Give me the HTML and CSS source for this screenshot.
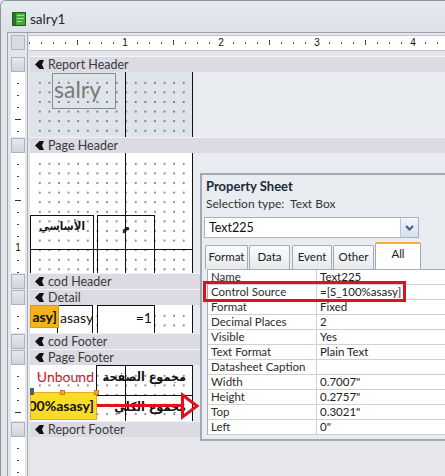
FILE: index.html
```html
<!DOCTYPE html>
<html lang="en">
<head>
<meta charset="utf-8">
<title>salry1</title>
<link rel="stylesheet" href="styles.css">
</head>
<body>
<div class="win">
  <header class="titlebar">
    <svg class="ticon" width="14" height="14" viewBox="0 0 14 14">
      <rect x="0.5" y="0.5" width="13" height="13" fill="#43a83a" stroke="#1f5e1a"/>
      <rect x="1" y="1" width="3" height="12" fill="#2a7424"/>
      <rect x="5" y="3" width="7" height="1" fill="#a6e596"/>
      <rect x="5" y="6" width="7" height="1" fill="#a6e596"/>
      <rect x="5" y="9" width="5" height="1" fill="#a6e596"/>
    </svg>
    <span class="title">salry1</span>
  </header>
  <div class="frame">
    <div class="row ruler-row">
      <div class="vr"><div class="corner"></div></div>
      <div class="main"><div class="hruler"><span class="n"><b>1</b></span><span class="n"><b>2</b></span><span class="n"><b>3</b></span><span class="n"><b>4</b></span></div></div>
    </div>

    <div class="row band-row">
      <div class="vr"><div class="sel"></div></div>
      <div class="band"><svg class="bi" viewBox="0 0 9 9"><path d="M0 4.5 L4.5 0 L9 0 L7 4.5 L9 9 L4.5 9 Z"/></svg>Report Header</div>
    </div>
    <div class="row sec rh">
      <div class="vr"><div class="vt"><i class="vh"></i></div></div>
      <div class="main">
        <div class="canvas rh-canvas">
          <div class="ctl salry">salry</div>
        </div>
        <div class="rest"></div>
      </div>
    </div>

    <div class="row band-row">
      <div class="vr"><div class="sel"></div></div>
      <div class="band"><svg class="bi" viewBox="0 0 9 9"><path d="M0 4.5 L4.5 0 L9 0 L7 4.5 L9 9 L4.5 9 Z"/></svg>Page Header</div>
    </div>
    <div class="row sec ph">
      <div class="vr"><div class="vt"><i class="vh"></i><b class="vn">1</b></div></div>
      <div class="main">
        <div class="canvas">
          <div class="ctl ar ph1">الأساسي</div>
          <div class="ctl ar ph2">م</div>
        </div>
        <div class="rest"></div>
      </div>
    </div>

    <div class="row band-row">
      <div class="vr"><div class="sel"></div></div>
      <div class="band"><svg class="bi" viewBox="0 0 9 9"><path d="M0 4.5 L4.5 0 L9 0 L7 4.5 L9 9 L4.5 9 Z"/></svg>cod Header</div>
    </div>
    <div class="row band-row">
      <div class="vr"><div class="sel"></div></div>
      <div class="band"><svg class="bi" viewBox="0 0 9 9"><path d="M0 4.5 L4.5 0 L9 0 L7 4.5 L9 9 L4.5 9 Z"/></svg>Detail</div>
    </div>
    <div class="row sec dt">
      <div class="vr"><div class="vt"></div></div>
      <div class="main">
        <div class="canvas">
          <div class="ctl dt-asasy">asasy</div>
          <div class="ctl clip dt-y"><span>asy]</span></div>
          <div class="ctl dt-1">=1</div>
        </div>
        <div class="rest"></div>
      </div>
    </div>

    <div class="row band-row">
      <div class="vr"><div class="sel"></div></div>
      <div class="band"><svg class="bi" viewBox="0 0 9 9"><path d="M0 4.5 L4.5 0 L9 0 L7 4.5 L9 9 L4.5 9 Z"/></svg>cod Footer</div>
    </div>
    <div class="row band-row">
      <div class="vr"><div class="sel"></div></div>
      <div class="band"><svg class="bi" viewBox="0 0 9 9"><path d="M0 4.5 L4.5 0 L9 0 L7 4.5 L9 9 L4.5 9 Z"/></svg>Page Footer</div>
    </div>
    <div class="row sec pf">
      <div class="vr"><div class="vt"><i class="vh"></i></div></div>
      <div class="main">
        <div class="canvas">
          <div class="ctl pf-unb">Unbound</div>
          <div class="ctl ar pf-l1">مجموع الصفحة</div>
          <div class="ctl ar pf-l2">مجموع الكلي</div>
          <div class="ctl clip pf-y"><span>00%asasy]</span></div>
          <div class="ctl h-move"></div>
          <div class="ctl hd hd1"></div>
          <div class="ctl hd hd2"></div>
        </div>
        <div class="rest"></div>
      </div>
    </div>

    <div class="row band-row">
      <div class="vr"><div class="sel"></div></div>
      <div class="band"><svg class="bi" viewBox="0 0 9 9"><path d="M0 4.5 L4.5 0 L9 0 L7 4.5 L9 9 L4.5 9 Z"/></svg>Report Footer</div>
    </div>
    <div class="row fill">
      <div class="vr"><div class="vt"></div></div>
      <div class="main empty"></div>
    </div>
  </div>
</div>

<div class="props">
  <div class="ps-title">Property Sheet</div>
  <div class="ps-sel">Selection type:&nbsp; Text Box</div>
  <div class="ps-combo"><span class="ps-val">Text225</span><span class="ps-btn"><svg width="9" height="6" viewBox="0 0 9 6"><path d="M1 1 L4.5 4.5 L8 1" fill="none" stroke="#3b5f8e" stroke-width="2"/></svg></span></div>
  <div class="ps-tabs">
    <span class="tab t-format">Format</span>
    <span class="tab t-data">Data</span>
    <span class="tab t-event">Event</span>
    <span class="tab t-other">Other</span>
    <span class="tab t-all">All</span>
  </div>
  <div class="ps-grid">
    <div class="pr"><span class="pk">Name</span><span class="pv">Text225</span></div>
    <div class="pr"><span class="pk">Control Source</span><span class="pv">=[S_100%asasy]</span></div>
    <div class="pr"><span class="pk">Format</span><span class="pv">Fixed</span></div>
    <div class="pr"><span class="pk">Decimal Places</span><span class="pv">2</span></div>
    <div class="pr"><span class="pk">Visible</span><span class="pv">Yes</span></div>
    <div class="pr"><span class="pk">Text Format</span><span class="pv">Plain Text</span></div>
    <div class="pr"><span class="pk">Datasheet Caption</span><span class="pv"></span></div>
    <div class="pr"><span class="pk">Width</span><span class="pv">0.7007"</span></div>
    <div class="pr"><span class="pk">Height</span><span class="pv">0.2757"</span></div>
    <div class="pr"><span class="pk">Top</span><span class="pv">0.3021"</span></div>
    <div class="pr"><span class="pk">Left</span><span class="pv">0"</span></div>
  </div>
  <div class="hl"></div>
</div>

<svg class="arrow" width="445" height="476" viewBox="0 0 445 476">
  <line x1="97" y1="405.5" x2="183" y2="405.5" stroke="#e3111b" stroke-width="3"/>
  <polygon points="182.5,395 197,406 182.5,417" fill="none" stroke="#e3111b" stroke-width="3" stroke-linejoin="miter"/>
</svg>
</body>
</html>
```

FILE: styles.css
```css
* { box-sizing: border-box; margin: 0; padding: 0; }
html, body { width: 445px; height: 476px; overflow: hidden; background: #e3e6ea; }
body { position: relative; font-family: Lato, "DejaVu Sans", sans-serif; color: #222; }

.win {
  width: 445px; height: 476px;
  border-left: 1px solid #8e949c; border-top: 1px solid #8e949c;
  border-top-left-radius: 6px;
  background: #e1e5ea;
  display: flex; flex-direction: column; overflow: hidden;
}
.titlebar {
  height: 31px; flex: none;
  display: flex; align-items: center; gap: 4px;
  padding: 4px 0 0 11px;
  background: linear-gradient(#e7eaee, #dde1e7);
}
.ticon { flex: none; }
.title { font-size: 13.5px; color: #1c2733; }

.frame {
  flex: 1; margin-left: 6px;
  border-left: 1px solid #9ba1a9; border-top: 1px solid #9ba1a9;
  display: flex; flex-direction: column;
  background: #e3e6ea;
}
.row { display: grid; grid-template-columns: 20px 1fr; flex: none; }
.vr { padding: 0 2px 0 3px; border-right: 1px solid #a9aeb6; }

/* ruler row */
.ruler-row { height: 23px; }
.ruler-row .vr { padding-top: 2px; padding-bottom: 6px; }
.corner { height: 100%; background: #d9dce1; border: 1px solid #b1b6be; }
.ruler-row .main { padding-top: 2px; }
.hruler {
  margin-left: 1px; height: 16px;
  border-top: 1px solid #c3c7cd; border-bottom: 1px solid #c3c7cd;
  background-color: #fff;
  background-image: linear-gradient(to right, #555 1px, transparent 1px), linear-gradient(to right, #333 1px, transparent 1px);
  background-size: 12px 2px, 96px 5px;
  background-position: 0 6px, 48px 4px;
  background-repeat: repeat-x;
  display: flex; padding-left: 48px;
}
.hruler .n { flex: none; width: 96px; text-align: center; font: 10px/14px "Liberation Sans", sans-serif; color: #111; }
.hruler .n b { font-weight: normal; background: #fff; padding: 0 1px; }

/* bands */
.band-row { height: 16px; }
.band-row .vr { padding-top: 1px; padding-bottom: 1px; }
.sel { height: 100%; background: linear-gradient(#e6e8ec, #d0d4da); border: 1px solid #aeb3bb; }
.band {
  margin-left: 2px;
  border-top: 1px solid #f3f3f6; border-bottom: 1px solid #4d4d4d;
  background: #dcdbe4;
  display: flex; align-items: center; gap: 4px; padding-left: 5px;
  font-size: 12.5px; color: #3a3a3a; white-space: nowrap;
}
.bi { width: 9px; height: 9px; fill: #111; flex: none; }

/* sections */
.sec .main { display: flex; margin-left: 2px; }
.rh { height: 65px; }
.ph { height: 120px; }
.dt { height: 28px; }
.pf { height: 56px; }
.vt {
  height: 100%; background-color: #fff;
  background-image: linear-gradient(to bottom, transparent 11px, #444 11px);
  background-size: 2px 12px; background-position: 6px 0; background-repeat: repeat-y;
  overflow: hidden;
}
.vh { display: block; width: 6px; height: 1px; margin: 47px auto 0; background: #333; box-shadow: 0 0 0 1px #fff; }
.vn { display: block; margin: 42px auto 0; width: 8px; font: 10px/10px "Liberation Sans", sans-serif; font-weight: normal; text-align: center; background: #fff; color: #111; }

.canvas {
  position: relative; flex: none; width: 163px; overflow: hidden;
  border-right: 1px solid #111;
  background-color: #fff;
  background-image:
    linear-gradient(to right, transparent 95px, #111 95px, #111 96px, transparent 96px),
    linear-gradient(to bottom, transparent 96px, #111 96px, #111 97px, transparent 97px);
}
.canvas::before {
  content: ""; position: absolute; top: 6px; left: 5px; right: 0; bottom: 0;
  background-image: radial-gradient(circle, #1a1a1a 0.5px, transparent 0.85px);
  background-size: 9.6px 9.6px;
}
.rh-canvas { background-color: #dfe4eb; }
.rest { flex: 1; background: #e8ebef; }

.fill { flex: 1; }
.empty { margin-left: 2px; background: #e5e7ea; }

/* controls on the design canvas */
.ctl { position: absolute; white-space: nowrap; overflow: hidden; font-size: 14px; color: #111; }
.ar { font-family: "DejaVu Sans Condensed", "DejaVu Sans", sans-serif; font-weight: bold; font-size: 11.5px; }
.clip { display: flex; justify-content: flex-end; font-weight: bold; }

.salry { left: 22px; top: 1px; width: 64px; height: 36px; border: 1px solid #8c8c8c; color: #7a7a7a; font-size: 23px; line-height: 30px; padding-left: 1px; }

.ph1 { left: 0; top: 62px; width: 64px; height: 60px; border: 1px solid #111; text-align: center; line-height: 20px; }
.ph2 { left: 67px; top: 62px; width: 58px; height: 60px; border: 1px solid #111; text-align: center; line-height: 22px; }

.dt-asasy { left: 27px; top: 0; width: 36px; height: 30px; border: 1px solid #111; background: #fff; padding-left: 2px; line-height: 23px; }
.dt-y { left: 0; top: 0; width: 29px; height: 23px; background: #f2b31c; border: 1px solid #d99a10; line-height: 21px; padding-right: 1px; }
.dt-1 { left: 67px; top: 0; width: 58px; height: 30px; border: 1px solid #111; background: #fff; text-align: right; padding-right: 2px; line-height: 23px; }

.pf-unb { left: 0; top: 0; width: 67px; height: 28px; border-right: 1px solid #111; color: #d2122e; text-align: right; padding-right: 2px; line-height: 24px; }
.pf-l1 { left: 66px; top: 0; width: 97px; height: 31px; border: 1px solid #111; text-align: right; padding-right: 6px; line-height: 22px; font-size: 12.5px; }
.pf-l2 { left: 68px; top: 31px; width: 94px; height: 25px; text-align: right; padding-right: 6px; line-height: 22px; font-size: 12.5px; }
.pf-y { left: 0; top: 27px; width: 67px; height: 28px; background: #f8dc26; border: 1px solid #e5a81e; line-height: 25px; padding-right: 2px; }
.h-move { left: 0; top: 23px; width: 4px; height: 7px; background: #5c5c5c; }
.hd { top: 25px; width: 5px; height: 5px; background: #f4a83c; border: 1px solid #c97c12; }
.hd1 { left: 30px; }
.hd2 { left: 64px; }

/* red arrow overlay */
.arrow { position: absolute; left: 0; top: 0; pointer-events: none; }

/* property sheet (floating panel) */
.props {
  position: absolute; left: 200px; top: 173px;
  width: 262px; height: 268px;
  border: 2px solid #a3a9b1; border-right: none;
  background: #e9ecf0;
  display: flex; flex-direction: column;
  font-size: 12px;
}
.ps-title { height: 22px; line-height: 22px; padding-left: 4px; font-weight: bold; font-size: 13px; color: #1b2a3a; }
.ps-sel { height: 14px; line-height: 14px; padding-left: 4px; font-size: 12px; color: #333; }
.ps-combo {
  margin: 6px 0 0 2px; width: 215px; height: 21px;
  border: 1px solid #a9b1bb; background: #fff;
  display: flex; align-items: stretch;
}
.ps-val { flex: 1; padding-left: 4px; line-height: 19px; font-size: 12.5px; color: #111; }
.ps-btn {
  width: 18px; flex: none;
  display: flex; align-items: center; justify-content: center;
  background: linear-gradient(#f3f6fa, #d5dfec);
  border-left: 1px solid #bcc7d5;
}
.ps-tabs { margin-top: 4px; height: 27px; display: flex; align-items: flex-end; padding-left: 3px; }
.tab {
  height: 24px; line-height: 22px; text-align: center; white-space: nowrap;
  border: 1px solid #a4abb4; border-bottom: none; border-radius: 2px 2px 0 0;
  background: linear-gradient(#fbfbfc, #e6e9ed);
  font-size: 11.5px; color: #222;
}
.t-format { width: 43px; }
.t-data { width: 41px; margin-left: 1px; }
.t-event { width: 40px; margin-left: 2px; }
.t-other { width: 41px; margin-left: 1px; }
.t-all { width: 46px; margin-left: 1px; height: 27px; line-height: 19px; background: #fff; border-top: 2px solid #f6ad3e; }
.ps-grid { margin-left: 5px; border-top: 1px solid #a6adb5; border-left: 1px solid #a6adb5; background: #fff; }
.pr { display: flex; height: 15px; border-bottom: 1px solid #cdd0d5; line-height: 14px; font-size: 11.5px; }
.pk { width: 109px; flex: none; border-right: 1px solid #cdd0d5; padding-left: 3px; color: #2b2b2b; white-space: nowrap; }
.pv { padding-left: 3px; color: #222; white-space: nowrap; }
.hl { position: absolute; left: 1px; top: 106px; width: 203px; height: 21px; border: 3px solid #e0101e; }
```
